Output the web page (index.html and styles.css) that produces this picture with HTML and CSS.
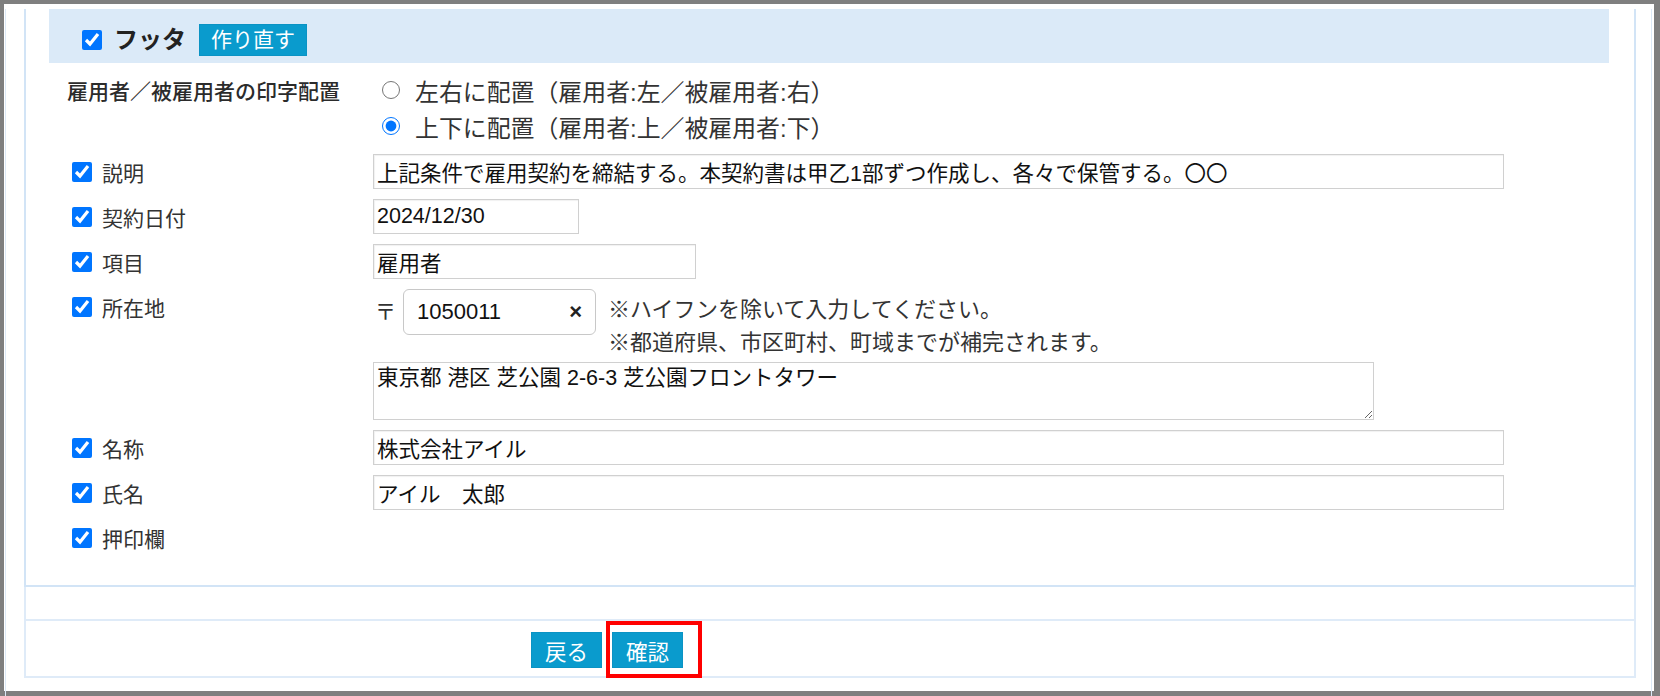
FILE: index.html
```html
<!DOCTYPE html>
<html lang="ja">
<head>
<meta charset="utf-8">
<title>フッタ</title>
<link rel="stylesheet" href="styles.css">
</head>
<body>
<div class="frame">
  <div class="outer">
    <div class="panel">
      <div class="band">
        <input type="checkbox" class="cb" checked>
        <span class="band-title">フッタ</span>
        <button class="btn btn-remake" type="button">作り直す</button>
      </div>
      <div class="form">
        <div class="row row-radio">
          <div class="label label-strong">雇用者／被雇用者の印字配置</div>
          <div class="field radios">
            <label class="radio"><input type="radio" name="layout">左右に配置（雇用者:左／被雇用者:右）</label>
            <label class="radio"><input type="radio" name="layout" checked>上下に配置（雇用者:上／被雇用者:下）</label>
          </div>
        </div>
        <div class="row">
          <label class="label"><input type="checkbox" class="cb" checked>説明</label>
          <div class="field"><input class="text w-long" type="text" value="上記条件で雇用契約を締結する。本契約書は甲乙1部ずつ作成し、各々で保管する。〇〇"></div>
        </div>
        <div class="row">
          <label class="label"><input type="checkbox" class="cb" checked>契約日付</label>
          <div class="field"><input class="text w-date" type="text" value="2024/12/30"></div>
        </div>
        <div class="row">
          <label class="label"><input type="checkbox" class="cb" checked>項目</label>
          <div class="field"><input class="text w-item" type="text" value="雇用者"></div>
        </div>
        <div class="row">
          <label class="label"><input type="checkbox" class="cb" checked>所在地</label>
          <div class="field">
            <div class="zipline">
              <span class="postmark">〒</span>
              <div class="zipbox">
                <span class="zipval">1050011</span>
                <span class="zipclear">×</span>
              </div>
              <div class="notes">
                <div>※ハイフンを除いて入力してください。</div>
                <div>※都道府県、市区町村、町域までが補完されます。</div>
              </div>
            </div>
            <textarea class="addr">東京都 港区 芝公園 2-6-3 芝公園フロントタワー</textarea>
          </div>
        </div>
        <div class="row">
          <label class="label"><input type="checkbox" class="cb" checked>名称</label>
          <div class="field"><input class="text w-long" type="text" value="株式会社アイル"></div>
        </div>
        <div class="row">
          <label class="label"><input type="checkbox" class="cb" checked>氏名</label>
          <div class="field"><input class="text w-long" type="text" value="アイル　太郎"></div>
        </div>
        <div class="row">
          <label class="label"><input type="checkbox" class="cb" checked>押印欄</label>
        </div>
      </div>
    </div>
    <div class="box-empty"></div>
    <div class="box-buttons">
      <button class="btn btn-action" type="button">戻る</button>
      <button class="btn btn-action" type="button">確認</button>
      <div class="highlight"></div>
    </div>
  </div>
</div>
</body>
</html>
```
FILE: styles.css
```css
* { box-sizing: border-box; }
html, body { margin: 0; padding: 0; }
body {
  width: 1660px;
  height: 696px;
  overflow: hidden;
  background: #fff;
  font-family: "Liberation Sans", "Noto Sans CJK JP", sans-serif;
  color: #333;
}
.frame {
  height: 696px;
  border-style: solid;
  border-color: #7f7f7f;
  border-width: 4px 6px 5px 4px;
  padding: 0 2px 0 1px;
  background: #fff;
}
.outer {
  height: 100%;
  border-left: 1px solid #dce9f7;
  border-right: 1px solid #dce9f7;
  padding: 0 15px 0 18px;
}
.panel {
  border: 2px solid #d2e4f6;
  border-top: none;
}
.band {
  margin: 5px 25px 0 23px;
  height: 54px;
  background: #dbeaf8;
  padding: 15px 33px 7px;
  display: flex;
  align-items: center;
}
.cb {
  width: 20px;
  height: 20px;
  margin: 0 10px 0 0;
  flex: none;
}
.band .cb { margin-right: 12px; }
.band-title {
  font-size: 24px;
  font-weight: bold;
  color: #222;
  line-height: 32px;
  margin-right: 13px;
}
.btn {
  font-family: "Liberation Sans", "Noto Sans CJK JP", sans-serif;
  background: #0a9bcd;
  color: #fff;
  border: 1px solid #0a93c4;
  border-radius: 0;
  cursor: pointer;
}
.btn-remake {
  height: 32px;
  font-size: 21px;
  line-height: 28px;
  padding: 0 11px;
}
.form {
  padding: 9px 0 30px 46px;
  display: flex;
  flex-direction: column;
  gap: 10px;
}
.row {
  display: flex;
  align-items: flex-start;
}
.label {
  width: 301px;
  flex: none;
  height: 35px;
  display: flex;
  align-items: center;
  font-size: 21px;
  color: #333;
}
.label-strong {
  margin-left: -5px;
  width: 306px;
  height: 36px;
  font-weight: 500;
  color: #2b2b2b;
  font-size: 21px;
}
.field { flex: none; }
.radios { display: flex; flex-direction: column; }
.radio {
  display: flex;
  align-items: center;
  height: 36px;
  font-size: 23.9px;
  color: #333;
}
.radio input {
  width: 18px;
  height: 18px;
  margin: 0 15px 0 9px;
}
.text {
  height: 35px;
  border: 1px solid #d0d0d0;
  box-shadow: inset 1px 1px 1px rgba(0,0,0,0.06);
  font-family: "Liberation Sans", "Noto Sans CJK JP", sans-serif;
  font-size: 21.5px;
  color: #111;
  padding: 0 3px;
  outline: none;
}
.w-long { width: 1131px; }
.w-date { width: 206px; }
.w-item { width: 323px; }
.zipline {
  display: flex;
  align-items: flex-start;
}
.postmark {
  font-size: 21px;
  color: #333;
  line-height: 46px;
  margin: 0 7px 0 2px;
}
.zipbox {
  width: 193px;
  height: 46px;
  border: 1px solid #c8c8c8;
  border-radius: 6px;
  display: flex;
  align-items: center;
  justify-content: space-between;
  padding: 0 13px 0 13px;
  font-size: 22px;
  color: #111;
}
.zipclear {
  font-size: 22px;
  font-weight: bold;
  color: #222;
}
.notes {
  margin-left: 12px;
  padding-top: 4px;
  font-size: 22px;
  line-height: 33px;
  color: #333;
}
.addr {
  display: block;
  margin-top: 3px;
  width: 1001px;
  height: 58px;
  border: 1px solid #d0d0d0;
  font-family: "Liberation Sans", "Noto Sans CJK JP", sans-serif;
  font-size: 21.5px;
  line-height: 26px;
  color: #111;
  padding: 2px 3px;
  resize: both;
  outline: none;
}
.box-empty {
  height: 34px;
  border: 2px solid #dfebf8;
  border-top: none;
}
.box-buttons {
  position: relative;
  height: 57px;
  border: 2px solid #dfebf8;
  border-top: none;
  padding: 11px 0 0 505px;
  display: flex;
  align-items: flex-start;
  gap: 10px;
}
.btn-action {
  height: 36px;
  width: 71px;
  font-size: 21.5px;
  padding: 0;
}
.highlight {
  position: absolute;
  left: 580px;
  top: 0;
  width: 96px;
  height: 57px;
  border: 4px solid #ff0000;
}
```
